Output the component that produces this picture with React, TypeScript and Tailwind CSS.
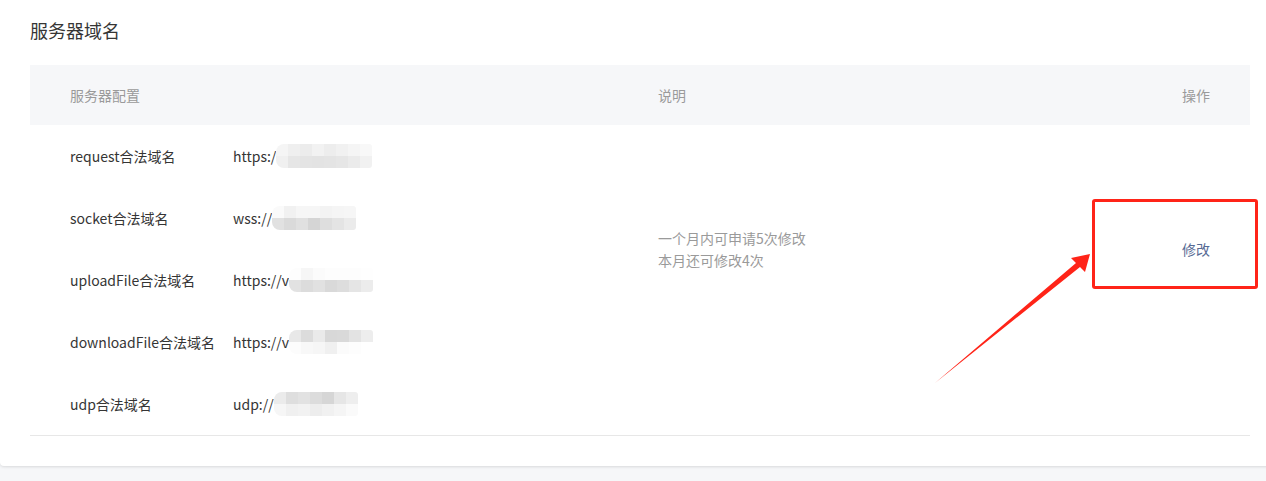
import React from "react"

interface Row {
  label: string
  prefix: string
  top: string[]
  bottom: string[]
}

const rows: Row[] = [
  {
    label: "request合法域名",
    prefix: "https:/",
    top: ["#f5f5f5", "#efefef", "#ececec", "#f2f2f2", "#ededed", "#f1f1f1", "#f5f5f5", "#f8f8f8"],
    bottom: ["#f0f0f0", "#e6e6e6", "#e4e4e4", "#e3e3e3", "#e4e4e4", "#e6e6e6", "#ebebeb", "#f1f1f1"],
  },
  {
    label: "socket合法域名",
    prefix: "wss://",
    top: ["#fafafa", "#f1f1f1", "#f6f6f6", "#f6f6f6", "#f3f3f3", "#f5f5f5", "#f6f6f6"],
    bottom: ["#e1e1e1", "#dadada", "#e0e0e0", "#d5d5d5", "#dedede", "#e4e4e4", "#ebebeb"],
  },
  {
    label: "uploadFile合法域名",
    prefix: "https://v",
    top: ["#fdfdfd", "#f6f6f6", "#fbfbfb", "#fdfdfd", "#fdfdfd", "#fdfdfd", "#fefefe"],
    bottom: ["#e2e2e2", "#dcdcdc", "#e1e1e1", "#d9d9d9", "#dddddd", "#e5e5e5", "#ececec"],
  },
  {
    label: "downloadFile合法域名",
    prefix: "https://v",
    top: ["#e8e8e8", "#dcdcdc", "#eaeaea", "#d8d8d8", "#d9d9d9", "#e3e3e3", "#ededed"],
    bottom: ["#fcfcfc", "#f8f8f8", "#f6f6f6", "#f0f0f0", "#fbfbfb", "#fdfdfd", "#ffffff"],
  },
  {
    label: "udp合法域名",
    prefix: "udp://",
    top: ["#ebebeb", "#dedede", "#e2e2e2", "#dcdcdc", "#d6d6d6", "#e6e6e6", "#eeeeee"],
    bottom: ["#f6f6f6", "#f0f0f0", "#f2f2f2", "#ededed", "#f1f1f1", "#f5f5f5", "#fafafa"],
  },
]

function Mosaic({ top, bottom }: { top: string[]; bottom: string[] }) {
  return (
    <span className="inline-flex flex-col overflow-hidden rounded-l-[8px] rounded-r-[3px]">
      <span className="flex">
        {top.map((c, i) => (
          <span key={i} className="block w-[12px] h-[12px]" style={{ backgroundColor: c }} />
        ))}
      </span>
      <span className="flex">
        {bottom.map((c, i) => (
          <span key={i} className="block w-[12px] h-[12px]" style={{ backgroundColor: c }} />
        ))}
      </span>
    </span>
  )
}

export default function App() {
  return (
    <div className="relative w-[1266px] h-[481px] overflow-hidden bg-[#f6f7f9] font-['Noto_Sans_CJK_SC','Noto_Sans',sans-serif]">
      <div className="w-[1280px] bg-white rounded-b-[4px] shadow-[0_1px_3px_rgba(0,0,0,0.12)] px-[30px] pt-[18px] pb-[30px]">
        <h2 className="text-[18px] leading-[24px] text-[#353535] font-normal">服务器域名</h2>

        <div className="mt-[23px]">
          {/* Header */}
          <div className="grid grid-cols-[628px_1fr_auto] h-[60px] items-center bg-[#f6f7f9] text-[14px] text-[#9a9a9a]">
            <div className="pl-[40px]">服务器配置</div>
            <div>说明</div>
            <div className="pr-[40px] text-right">操作</div>
          </div>

          {/* Body */}
          <div className="grid grid-cols-[628px_1fr_auto] grid-rows-[repeat(5,62px)] border-b border-[#e7e7e7] text-[14px]">
            {rows.map((r, i) => (
              <div
                key={r.label}
                className="col-start-1 flex items-center pl-[40px] text-[#353535]"
                style={{ gridRowStart: i + 1 }}
              >
                <span className="w-[163px] shrink-0">{r.label}</span>
                <span className="flex items-center">
                  <span>{r.prefix}</span>
                  <Mosaic top={r.top} bottom={r.bottom} />
                </span>
              </div>
            ))}
            <div className="col-start-2 row-start-1 row-span-4 flex flex-col justify-center text-[14px] leading-[22px] text-[#9a9a9a]">
              <p>一个月内可申请5次修改</p>
              <p>本月还可修改4次</p>
            </div>
            <div className="col-start-3 row-start-1 row-span-4 flex items-center justify-end pr-[40px]">
              <a className="text-[#576b95] cursor-pointer">修改</a>
            </div>
          </div>
        </div>
      </div>

      {/* annotation */}
      <div className="absolute left-[1092px] top-[199px] w-[166px] h-[90px] border-[3px] border-[#ff2418] rounded-[3px]" />
      <svg className="absolute inset-0 pointer-events-none" width="1266" height="481" viewBox="0 0 1266 481">
        <path d="M935 383 L1076 263 L1071 258 L1090 254 L1085 272 L1080 267 Z" fill="#ff2418" />
      </svg>
    </div>
  )
}
